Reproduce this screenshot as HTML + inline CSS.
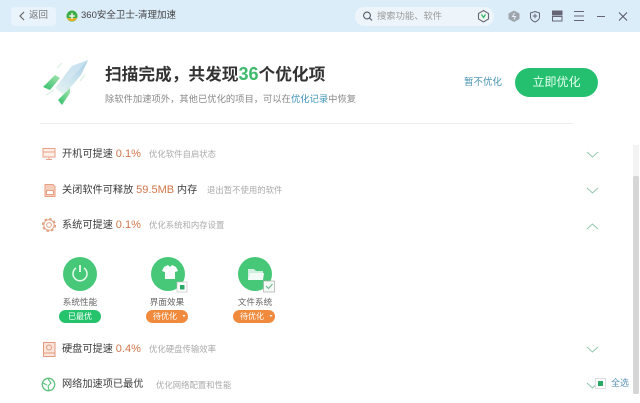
<!DOCTYPE html>
<html><head><meta charset="utf-8">
<style>
*{margin:0;padding:0;box-sizing:border-box}
html,body{width:640px;height:403px;overflow:hidden;background:#fff;font-family:"Liberation Sans","Noto Sans CJK SC",sans-serif}
#w{position:absolute;left:0;top:0;width:640px;height:403px;overflow:hidden;filter:blur(.3px)}
.a{position:absolute;white-space:nowrap}
svg{position:absolute;overflow:visible}
.rt{font-size:10.2px;color:#3c3c3c;line-height:14px}
.rt b{font-weight:400;color:#d0764a;font-size:11px}
.rd{font-size:8.4px;color:#aaa;line-height:12px}
.lbl{font-size:8.6px;color:#666;line-height:12px;text-align:center;width:60px}
.pill{height:12.500px;width:42px;border-radius:7px;color:#fff;font-size:8px;line-height:14px;text-align:center}
.o{background:#f08a3c}.g{background:#24c36c}
.c{width:34px;height:34px;border-radius:50%;background:#46c878}
</style></head><body><div id="w">
<div class="a" style="left:0;top:0;width:640px;height:32px;background:#dcedfa"></div>
<div class="a" style="left:11px;top:7px;width:45px;height:19px;border-radius:4px;background:#e9f3fb"></div>
<div class="a" style="left:355px;top:7px;width:139px;height:19px;border-radius:10px;background:#edf5fb"></div>
<svg style="left:0;top:0" width="640" height="32" fill="none">
<path d="M24 12l-4 4 4 4" stroke="#666" stroke-width="1.200"/>
<circle cx="72" cy="16" r="5.500" fill="#3fae49"/><path d="M67 18a5.500 5.500 0 0 0 10 0z" fill="#e0b020"/><path d="M69 16h6M72 13v6" stroke="#fff" stroke-width="1.300"/>
<circle cx="367" cy="15.500" r="3.400" stroke="#556" stroke-width="1.100"/><path d="M369.500 18l2.500 2.500" stroke="#556" stroke-width="1.100"/>
<path d="M483.500 10.500l5 3v5.500l-5 3-5-3v-5.500z" stroke="#667" stroke-width="1.100" fill="#eef6f2"/><path d="M481.500 14.500l2 3 2-3" stroke="#2ab56a" stroke-width="1.200"/>
<path d="M514 10.500l5.500 3v5.500l-5.500 3-5.500-3v-5.500z" fill="#9ea6ac"/><path d="M514.500 13l-2 3.500h3l-1.500 3" stroke="#eef" stroke-width=".9"/>
<path d="M535 11.500l4.500 1.500v4c0 2.500-2 4-4.500 5-2.500-1-4.500-2.500-4.500-5v-4z" stroke="#667" stroke-width="1"/><path d="M532.700 16h4.600M535 13.700v4.600" stroke="#667"/>
<rect x="552.500" y="11" width="9.500" height="4" stroke="#667" fill="#667"/><rect x="552.500" y="16.500" width="9.500" height="4.500" stroke="#667"/>
<path d="M574 11.500h10M574 16h10M574 20.500h10" stroke="#667"/>
<path d="M597 16.500h8" stroke="#667" stroke-width="1"/>
<path d="M619 12.500l8 8M627 12.500l-8 8" stroke="#556" stroke-width="1"/>
</svg>
<div class="a" style="left:29px;top:9px;font-size:9.500px;line-height:14px;color:#777">返回</div>
<div class="a" style="left:81px;top:9px;font-size:9.500px;line-height:14px;color:#444">360安全卫士-清理加速</div>
<div class="a" style="left:377px;top:10px;font-size:9.300px;line-height:13px;color:#999">搜索功能、软件</div>

<svg style="left:0;top:0" width="110" height="120">
<defs><linearGradient id="r" x1="0" y1="1" x2="1" y2="0"><stop offset="0" stop-color="#eef7f4"/><stop offset="1" stop-color="#a5cfe6"/></linearGradient>
<linearGradient id="f" x1="1" y1="0" x2="0" y2="1"><stop offset="0" stop-color="#a6e4b0"/><stop offset="1" stop-color="#2fbf68"/></linearGradient></defs>
<path d="M88 60L72 66 55 88 64 95 81 75z" fill="url(#r)"/>
<path d="M88 60L72 66 59 91z" fill="#d4e8f2" opacity=".7"/>
<path d="M43 87L55 75 60 78 50 90z" fill="url(#f)"/>
<path d="M58 100L70 88 70 93 62 105z" fill="url(#f)"/>
<path d="M62 63l-5 5M85 75l-5 6M46 95l8-5" stroke="#dff2e6" stroke-width="1.500" fill="none"/>
</svg>
<div class="a" style="left:105px;top:62px;font-size:16.700px;line-height:24px;font-weight:700;color:#333">扫描完成&#xFF0C;共发现<span style="color:#3dba6c;font-size:18px">36</span>个优化项</div>
<div class="a" style="left:105px;top:92px;font-size:9.300px;line-height:14px;color:#888">除软件加速项外&#xFF0C;其他已优化的项目&#xFF0C;可以在<span style="color:#3d92b8">优化记录</span>中恢复</div>
<div class="a" style="left:464px;top:76px;font-size:9.500px;line-height:14px;color:#4a94b4">暂不优化</div>
<div class="a" style="left:515px;top:68px;width:83px;height:29px;border-radius:15px;background:#25c06f;color:#e8fff2;font-size:12px;line-height:29px;text-align:center">立即优化</div>
<div class="a" style="left:40px;top:123px;width:533px;height:1px;background:#eee"></div>

<svg style="left:0;top:130px" width="640" height="273" fill="none">
<g stroke="#e8a085" stroke-width="1"><rect x="43" y="18.500" width="12" height="8.500" fill="#fdeee8"/><path d="M43 22h12M46 29.500h6M49 27v2.500"/></g>
<g stroke="#e8a085"><path d="M45 54.500h8l2 2v10h-10z" fill="#f6cdbb"/><rect x="46.500" y="60.500" width="7" height="4" fill="#fff"/></g>
<g stroke="#e0a080"><circle cx="49" cy="95" r="5.200" stroke-width="1"/><circle cx="49" cy="95" r="6.300" stroke-width="1.500" stroke-dasharray="2.600 2.350"/><circle cx="49" cy="95" r="2.400"/></g>
<g stroke="#e09a80"><rect x="43.500" y="212.500" width="11.500" height="14" fill="#fbe4da"/><circle cx="49" cy="217.500" r="2.500"/><path d="M43.500 223h11.500"/></g>
<circle cx="48.500" cy="254.500" r="6.200" stroke="#5cc07c" stroke-width="1.300"/><path d="M48 249l3 4-3 3 1 4M43 253l4 2" stroke="#5cc07c" stroke-width="1.100"/>
<g stroke="#8ec9ad" stroke-width="1"><path d="M587 22l5.500 5 5.500-5M587 58l5.500 5 5.500-5M587 99l5.500-5 5.500 5M587 217l5.500 5 5.500-5M587 253l5.500 5 4-4"/></g>
</svg>
<div class="a rt" style="left:62px;top:147px">开机可提速 <b>0.1%</b></div>
<div class="a rd" style="left:149px;top:148px">优化软件自启状态</div>
<div class="a rt" style="left:62px;top:183px">关闭软件可释放 <b>59.5MB</b> 内存</div>
<div class="a rd" style="left:207px;top:184px">退出暂不使用的软件</div>
<div class="a rt" style="left:62px;top:218px">系统可提速 <b>0.1%</b></div>
<div class="a rd" style="left:149px;top:219px">优化系统和内存设置</div>
<div class="a rt" style="left:62px;top:342px">硬盘可提速 <b>0.4%</b></div>
<div class="a rd" style="left:149px;top:343px">优化硬盘传输效率</div>
<div class="a rt" style="left:62px;top:378px">网络加速项已最优</div>
<div class="a rd" style="left:156px;top:379px">优化网络配置和性能</div>

<div class="a c" style="left:63px;top:257px"></div>
<div class="a c" style="left:151px;top:257px"></div>
<div class="a c" style="left:238px;top:257px"></div>
<svg style="left:0;top:250px" width="300" height="60" fill="none">
<path d="M76 18a7 7 0 1 0 8 0" stroke="#e8fff0" stroke-width="1.500"/><path d="M80 15v7" stroke="#e8fff0" stroke-width="1.800"/>
<path d="M164 17l4-2 2 2 2-2 4 2 2 4-3 1v7h-10v-7l-3-1z" fill="#fff"/>
<path d="M248 19h6l2 2h7v9h-15z" fill="#cfeedd"/><path d="M250 23h14l-1 7h-15z" fill="#f2fbf6"/>
<rect x="177" y="32" width="10" height="10" fill="#fff" stroke="#bbb" stroke-width=".6"/><rect x="180" y="35" width="4.500" height="4.500" fill="#2aa866"/>
<rect x="263.500" y="31" width="11" height="11" fill="#f4faf6" stroke="#aaa" stroke-width=".7"/><path d="M266 36l2.500 2.500 4-4.500" stroke="#6ab48a"/>
</svg>
<div class="a lbl" style="left:50px;top:296px">系统性能</div>
<div class="a lbl" style="left:137px;top:296px">界面效果</div>
<div class="a lbl" style="left:225px;top:296px">文件系统</div>
<div class="a pill g" style="left:59px;top:310px">已最优</div>
<div class="a pill o" style="left:146px;top:310px;padding-right:4px">待优化</div>
<div class="a pill o" style="left:233px;top:310px;padding-right:4px">待优化</div>
<svg style="left:0;top:310px" width="300" height="13"><path d="M182.500 5h3l-1.500 2zM269.500 5h3l-1.500 2z" fill="#fff"/></svg>

<div class="a" style="left:633px;top:145px;width:6px;height:249px;background:#f3f3f3"></div>
<div class="a" style="left:633px;top:176px;width:6px;height:218px;background:#d6d6d6;border-radius:2px"></div>
<div class="a" style="left:595px;top:378px;width:11px;height:11px;background:#fff;border:1px solid #ddd"></div>
<div class="a" style="left:598px;top:381px;width:5px;height:5px;background:#2aa866"></div>
<div class="a" style="left:611px;top:377px;font-size:9px;line-height:13px;color:#5a93b8">全选</div>
</div></body></html>
